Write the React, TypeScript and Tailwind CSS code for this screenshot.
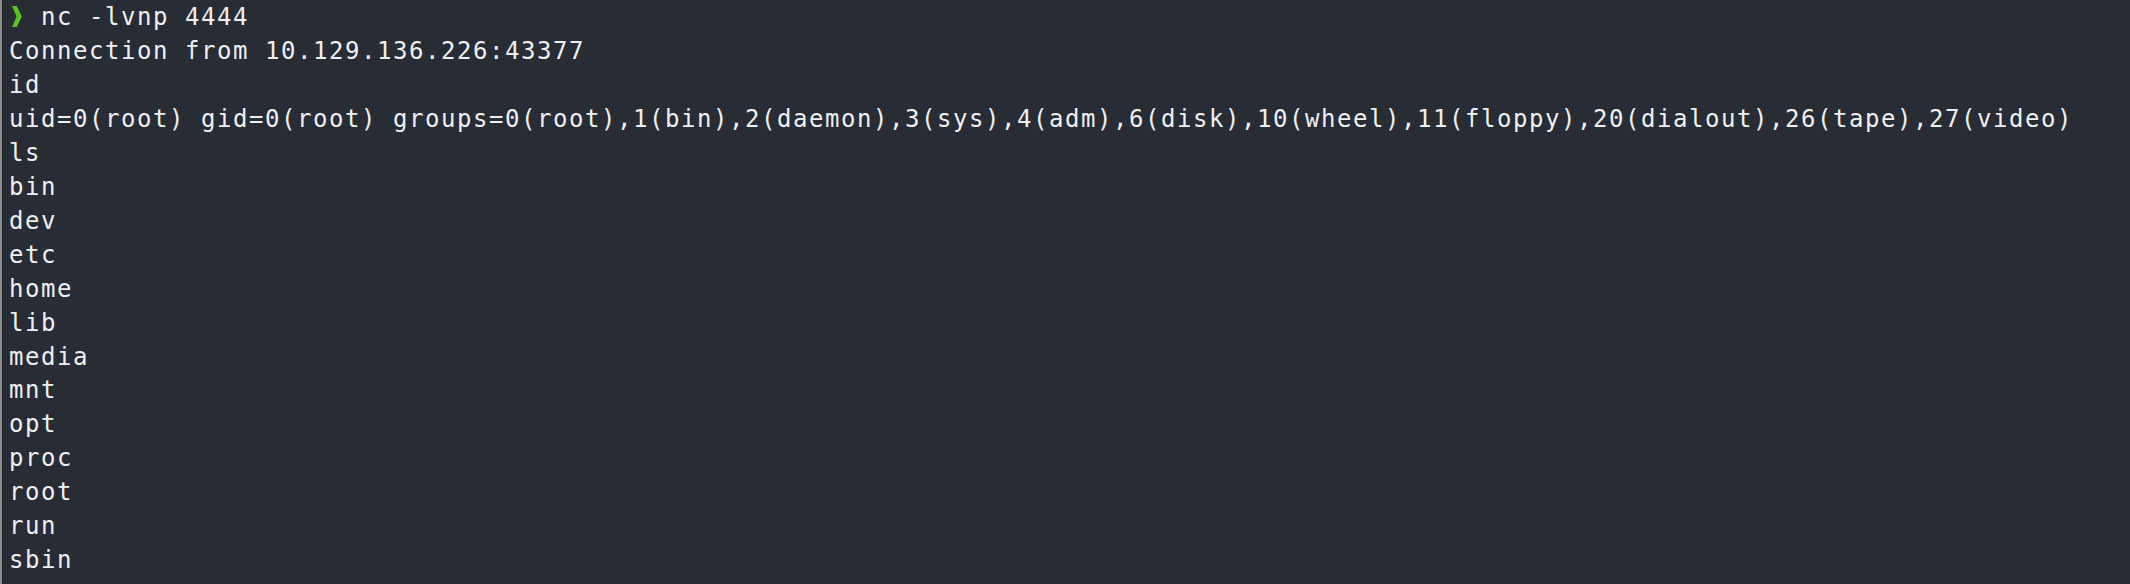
import { JSX } from "react";

const lines = [
  "Connection from 10.129.136.226:43377",
  "id",
  "uid=0(root) gid=0(root) groups=0(root),1(bin),2(daemon),3(sys),4(adm),6(disk),10(wheel),11(floppy),20(dialout),26(tape),27(video)",
  "ls",
  "bin",
  "dev",
  "etc",
  "home",
  "lib",
  "media",
  "mnt",
  "opt",
  "proc",
  "root",
  "run",
  "sbin",
];

// prompt chevron, one column wide
function Prompt(): JSX.Element {
  return (
    <span className="inline-block w-[16px] align-top h-[33.95px] relative">
      <svg
        className="absolute left-[3px] top-[5px]"
        width="10"
        height="21"
        viewBox="0 0 10 21"
      >
        <polygon points="0,0 4.8,0 9.8,10.5 4.8,21 0,21 4.6,10.5" fill="#55c81e" />
      </svg>
    </span>
  );
}

export default function App(): JSX.Element {
  return (
    <div className="w-[2130px] h-[584px] overflow-hidden bg-[#282c34] border-l-2 border-[#8e8e8e]">
      <div className="h-full border-l border-[#1e2127] pl-[6px] pt-px text-[24px] leading-[33.95px] tracking-[1.55px] text-[#eef0f2] font-['DejaVu_Sans_Mono',monospace] whitespace-pre">
        <div>
          <Prompt /> nc -lvnp 4444
        </div>
        {lines.map((line, i) => (
          <div key={i}>{line}</div>
        ))}
      </div>
    </div>
  );
}
